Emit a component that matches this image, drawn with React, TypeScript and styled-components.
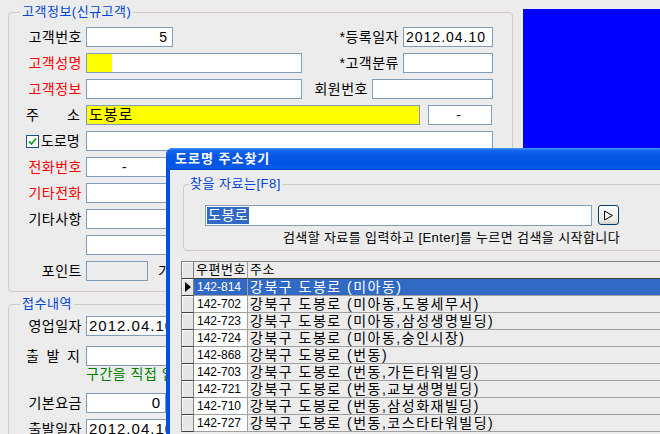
import React from 'react'
import styled, { createGlobalStyle } from 'styled-components'

const GlobalStyle = createGlobalStyle`
  html, body {
    margin: 0;
    padding: 0;
  }
  body {
    background: #ececec;
    font-family: 'Liberation Sans', 'Noto Sans CJK KR', sans-serif;
    font-size: 13px;
    color: #000;
  }
  #root {
    width: 660px;
    height: 434px;
    overflow: hidden;
  }
`

const Screen = styled.div`
  position: relative;
  display: flex;
  align-items: flex-start;
  gap: 10px;
  width: 660px;
  height: 434px;
  padding: 4px 0 0 8px;
  box-sizing: border-box;
  overflow: hidden;
`

const FormColumn = styled.div`
  width: 505px;
  flex-shrink: 0;
  display: flex;
  flex-direction: column;
  gap: 4px;
`

const Group = styled.fieldset<{ $pt: number; $pb: number }>`
  margin: 0;
  min-width: 0;
  padding: ${({ $pt }) => $pt}px 19px ${({ $pb }) => $pb}px 17px;
  border: 1px solid #cfccc3;
  border-radius: 4px;
`

const Legend = styled.legend`
  margin-left: -6px;
  padding: 0 2px;
  color: #0046d5;
  font-size: 13px;
  line-height: 16px;
  letter-spacing: 0.5px;
`

const Rows = styled.div<{ $gap: number }>`
  display: flex;
  flex-direction: column;
  gap: ${({ $gap }) => $gap}px;
`

const Row = styled.div<{ $mt?: number }>`
  display: flex;
  align-items: center;
  height: 20px;
  margin-top: ${({ $mt }) => $mt || 0}px;
`

const Label = styled.span<{ $red?: boolean }>`
  width: 56px;
  margin-right: 4px;
  flex-shrink: 0;
  text-align: right;
  white-space: nowrap;
  font-size: 14px;
  letter-spacing: 0.5px;
  line-height: 20px;
  color: ${({ $red }) => ($red ? '#ff0000' : '#000')};
`

const SpreadLabel = styled.span`
  width: 54px;
  margin-right: 6px;
  flex-shrink: 0;
  display: flex;
  justify-content: space-between;
  font-size: 14px;
  line-height: 20px;
`

const SideLabel = styled.span<{ $auto?: boolean; $ml?: number }>`
  margin-left: ${({ $auto, $ml }) => ($auto ? 'auto' : `${$ml || 0}px`)};
  margin-right: 4px;
  white-space: nowrap;
  font-size: 14px;
  letter-spacing: 0.5px;
  line-height: 20px;
`

const Field = styled.div<{
  $w?: number
  $align?: 'left' | 'right' | 'center'
  $bg?: string
  $size?: number
  $indent?: number
  $ml?: number
}>`
  position: relative;
  box-sizing: border-box;
  flex: ${({ $w }) => ($w ? 'none' : '1')};
  width: ${({ $w }) => ($w ? `${$w}px` : 'auto')};
  height: 20px;
  margin-left: ${({ $ml }) => $ml || 0}px;
  padding: 0 4px 0 ${({ $indent }) => $indent ?? 2}px;
  border: 1px solid #7f9db9;
  background: ${({ $bg }) => $bg || '#fff'};
  text-align: ${({ $align }) => $align || 'left'};
  font-size: ${({ $size }) => $size || 14}px;
  letter-spacing: 1px;
  line-height: 18px;
  white-space: nowrap;
  overflow: hidden;
`

const YellowMark = styled.span`
  position: absolute;
  left: 0;
  top: 0;
  width: 25px;
  height: 100%;
  background: #ffff00;
`

const CheckLabel = styled.label`
  width: 54px;
  margin-right: 6px;
  flex-shrink: 0;
  display: flex;
  align-items: center;
  white-space: nowrap;
  font-size: 14px;
  line-height: 20px;
`

const CheckBox = styled.span`
  width: 13px;
  height: 13px;
  flex-shrink: 0;
  box-sizing: border-box;
  margin-right: 2px;
  border: 1px solid #1c5180;
  background: #fff;
  display: flex;
  align-items: center;
  justify-content: center;
`

const Note = styled.div`
  padding-left: 60px;
  height: 17px;
  line-height: 17px;
  color: #008000;
  font-size: 14px;
  letter-spacing: 0.5px;
  white-space: nowrap;
`

const BluePanel = styled.div`
  margin-top: 5px;
  width: 140px;
  height: 150px;
  flex-shrink: 0;
  background: #0000ff;
`

const Dialog = styled.div`
  position: absolute;
  left: 166px;
  top: 148px;
  width: 520px;
  height: 320px;
  display: flex;
  flex-direction: column;
  background: #0350e0;
  border-radius: 7px 7px 0 0;
`

const TitleBar = styled.div`
  height: 22px;
  padding-left: 9px;
  border-radius: 7px 7px 0 0;
  background: linear-gradient(
    to bottom,
    #4a9bff 0%,
    #1466ee 10%,
    #0858e6 35%,
    #0054e3 70%,
    #0a5ae8 90%,
    #0046c8 100%
  );
  color: #fff;
  font-weight: bold;
  font-size: 13px;
  line-height: 22px;
  letter-spacing: 1px;
`

const DialogBody = styled.div`
  flex: 1;
  margin-left: 4px;
  padding: 6px 0 0 13px;
  background: #ececec;
  display: flex;
  flex-direction: column;
`

const SearchGroup = styled.fieldset`
  margin: 0;
  min-width: 0;
  padding: 13px 0 2px 21px;
  border: 1px solid #cfccc3;
  border-radius: 4px;
`

const SearchLegend = styled.legend`
  margin-left: -16px;
  padding: 0 1px;
  color: #0046d5;
  font-size: 13px;
  line-height: 16px;
  letter-spacing: 0.5px;
`

const SearchRow = styled.div`
  display: flex;
  align-items: flex-start;
  gap: 6px;
`

const SearchField = styled.div`
  box-sizing: border-box;
  width: 387px;
  height: 21px;
  padding: 1px 1px;
  border: 1px solid #7f9db9;
  background: #fff;
  font-size: 14px;
  line-height: 17px;
`

const Selection = styled.span`
  display: inline-block;
  padding: 0 1px;
  background: #316ac5;
  color: #fff;
  letter-spacing: 0.5px;
`

const GoButton = styled.button`
  box-sizing: border-box;
  width: 21px;
  height: 20px;
  padding: 0;
  border: 1px solid #003c74;
  border-radius: 3px;
  background: linear-gradient(to bottom, #ffffff, #ecebe6 80%, #d6d0c5);
  display: flex;
  align-items: center;
  justify-content: center;
`

const Help = styled.div`
  width: 415px;
  margin-top: 2px;
  text-align: right;
  line-height: 20px;
  letter-spacing: 0.4px;
  white-space: nowrap;
`

const Grid = styled.div`
  margin: 10px 0 0 -2px;
  display: grid;
  grid-template-columns: 12px 54px 1fr;
  border-top: 1px solid #808080;
  border-left: 1px solid #808080;
  font-size: 12px;
`

const HeadCell = styled.div`
  box-sizing: border-box;
  height: 17px;
  padding-left: 2px;
  border-right: 1px solid #a0a0a0;
  border-bottom: 1px solid #404040;
  background: #ececec;
  font-size: 13px;
  line-height: 16px;
  letter-spacing: 0.5px;
  white-space: nowrap;
`

const Indicator = styled.div`
  box-sizing: border-box;
  height: 17px;
  border-right: 1px solid #808080;
  border-bottom: 1px solid #404040;
  background: #e6e6e6;
  box-shadow: inset 1px 1px #ffffff;
  display: flex;
  align-items: center;
  justify-content: center;
`

const Cell = styled.div<{ $selected?: boolean; $code?: boolean }>`
  box-sizing: border-box;
  height: 17px;
  padding-left: ${({ $code }) => ($code ? 3 : 2)}px;
  border-right: 1px solid #a0a0a0;
  border-bottom: 1px solid #a0a0a0;
  background: ${({ $selected, $code }) => ($selected ? '#316ac5' : $code ? '#ffffff' : '#ececec')};
  color: ${({ $selected }) => ($selected ? '#fff' : '#000')};
  font-size: ${({ $code }) => ($code ? 12 : 14)}px;
  letter-spacing: ${({ $code }) => ($code ? 0 : 1.5)}px;
  line-height: 16px;
  white-space: nowrap;
  overflow: hidden;
`

const addresses = [
  ['142-814', '강북구 도봉로 (미아동)'],
  ['142-702', '강북구 도봉로 (미아동,도봉세무서)'],
  ['142-723', '강북구 도봉로 (미아동,삼성생명빌딩)'],
  ['142-724', '강북구 도봉로 (미아동,숭인시장)'],
  ['142-868', '강북구 도봉로 (번동)'],
  ['142-703', '강북구 도봉로 (번동,가든타워빌딩)'],
  ['142-721', '강북구 도봉로 (번동,교보생명빌딩)'],
  ['142-710', '강북구 도봉로 (번동,삼성화재빌딩)'],
  ['142-727', '강북구 도봉로 (번동,코스타타워빌딩)'],
]

const Spread = ({ text }: { text: string }) => (
  <SpreadLabel>
    {text.split('').map((ch, i) => (
      <span key={i}>{ch}</span>
    ))}
  </SpreadLabel>
)

const App = () => {
  return (
    <Screen>
      <GlobalStyle />
      <FormColumn>
        <Group $pt={7} $pb={10}>
          <Legend>고객정보(신규고객)</Legend>
          <Rows $gap={6}>
            <Row>
              <Label>고객번호</Label>
              <Field $w={87} $align="right">5</Field>
              <SideLabel $auto>*등록일자</SideLabel>
              <Field $w={90}>2012.04.10</Field>
            </Row>
            <Row>
              <Label $red>고객성명</Label>
              <Field $w={216}>
                <YellowMark />
              </Field>
              <SideLabel $auto>*고객분류</SideLabel>
              <Field $w={90} />
            </Row>
            <Row>
              <Label $red>고객정보</Label>
              <Field $w={216} />
              <SideLabel $auto>회원번호</SideLabel>
              <Field $w={121} />
            </Row>
            <Row>
              <Spread text="주소" />
              <Field $w={334} $bg="#ffff00" $size={15}>도봉로</Field>
              <Field $w={64} $ml={8} $align="center">-</Field>
            </Row>
            <Row>
              <CheckLabel>
                <CheckBox>
                  <svg width="9" height="9" viewBox="0 0 9 9">
                    <path d="M1 4.5 L3.5 7 L8 1.5" fill="none" stroke="#21a121" strokeWidth="1.8" />
                  </svg>
                </CheckBox>
                도로명
              </CheckLabel>
              <Field />
            </Row>
            <Row>
              <Label $red>전화번호</Label>
              <Field $w={300} $indent={35}>-</Field>
            </Row>
            <Row>
              <Label $red>기타전화</Label>
              <Field $w={300} />
            </Row>
            <Row>
              <Label>기타사항</Label>
              <Field $w={300} />
            </Row>
            <Row>
              <Label />
              <Field $w={300} />
            </Row>
            <Row>
              <Label>포인트</Label>
              <Field $w={62} $bg="#ececec" />
              <SideLabel $ml={10}>가맹점</SideLabel>
            </Row>
          </Rows>
        </Group>
        <Group $pt={4} $pb={10}>
          <Legend>접수내역</Legend>
          <Rows $gap={0}>
            <Row>
              <Label>영업일자</Label>
              <Field $w={300} $size={15}>2012.04.10</Field>
            </Row>
            <Row $mt={10}>
              <Spread text="출발지" />
              <Field $w={300} />
            </Row>
            <Note>구간을 직접 입력하세요</Note>
            <Row $mt={10}>
              <Label>기본요금</Label>
              <Field $w={80} $align="right" $size={15}>0</Field>
            </Row>
            <Row $mt={6}>
              <Label>출발일자</Label>
              <Field $w={300} $size={15}>2012.04.10</Field>
            </Row>
          </Rows>
        </Group>
      </FormColumn>
      <BluePanel />

      <Dialog>
        <TitleBar>도로명 주소찾기</TitleBar>
        <DialogBody>
          <SearchGroup>
            <SearchLegend>찾을 자료는[F8]</SearchLegend>
            <SearchRow>
              <SearchField>
                <Selection>도봉로</Selection>
              </SearchField>
              <GoButton>
                <svg width="11" height="11" viewBox="0 0 11 11">
                  <path d="M1.5 1 L9.5 5.5 L1.5 10 Z" fill="none" stroke="#000" strokeWidth="1" />
                </svg>
              </GoButton>
            </SearchRow>
            <Help>검색할 자료를 입력하고 [Enter]를 누르면 검색을 시작합니다</Help>
          </SearchGroup>
          <Grid>
            <Indicator />
            <HeadCell>우편번호</HeadCell>
            <HeadCell>주소</HeadCell>
            {addresses.map(([code, addr], i) => (
              <React.Fragment key={code}>
                <Indicator>
                  {i === 0 && (
                    <svg width="6" height="10" viewBox="0 0 6 10">
                      <path d="M0 0 L6 5 L0 10 Z" fill="#000" />
                    </svg>
                  )}
                </Indicator>
                <Cell $code $selected={i === 0}>{code}</Cell>
                <Cell $selected={i === 0}>{addr}</Cell>
              </React.Fragment>
            ))}
          </Grid>
        </DialogBody>
      </Dialog>
    </Screen>
  )
}

export default App
